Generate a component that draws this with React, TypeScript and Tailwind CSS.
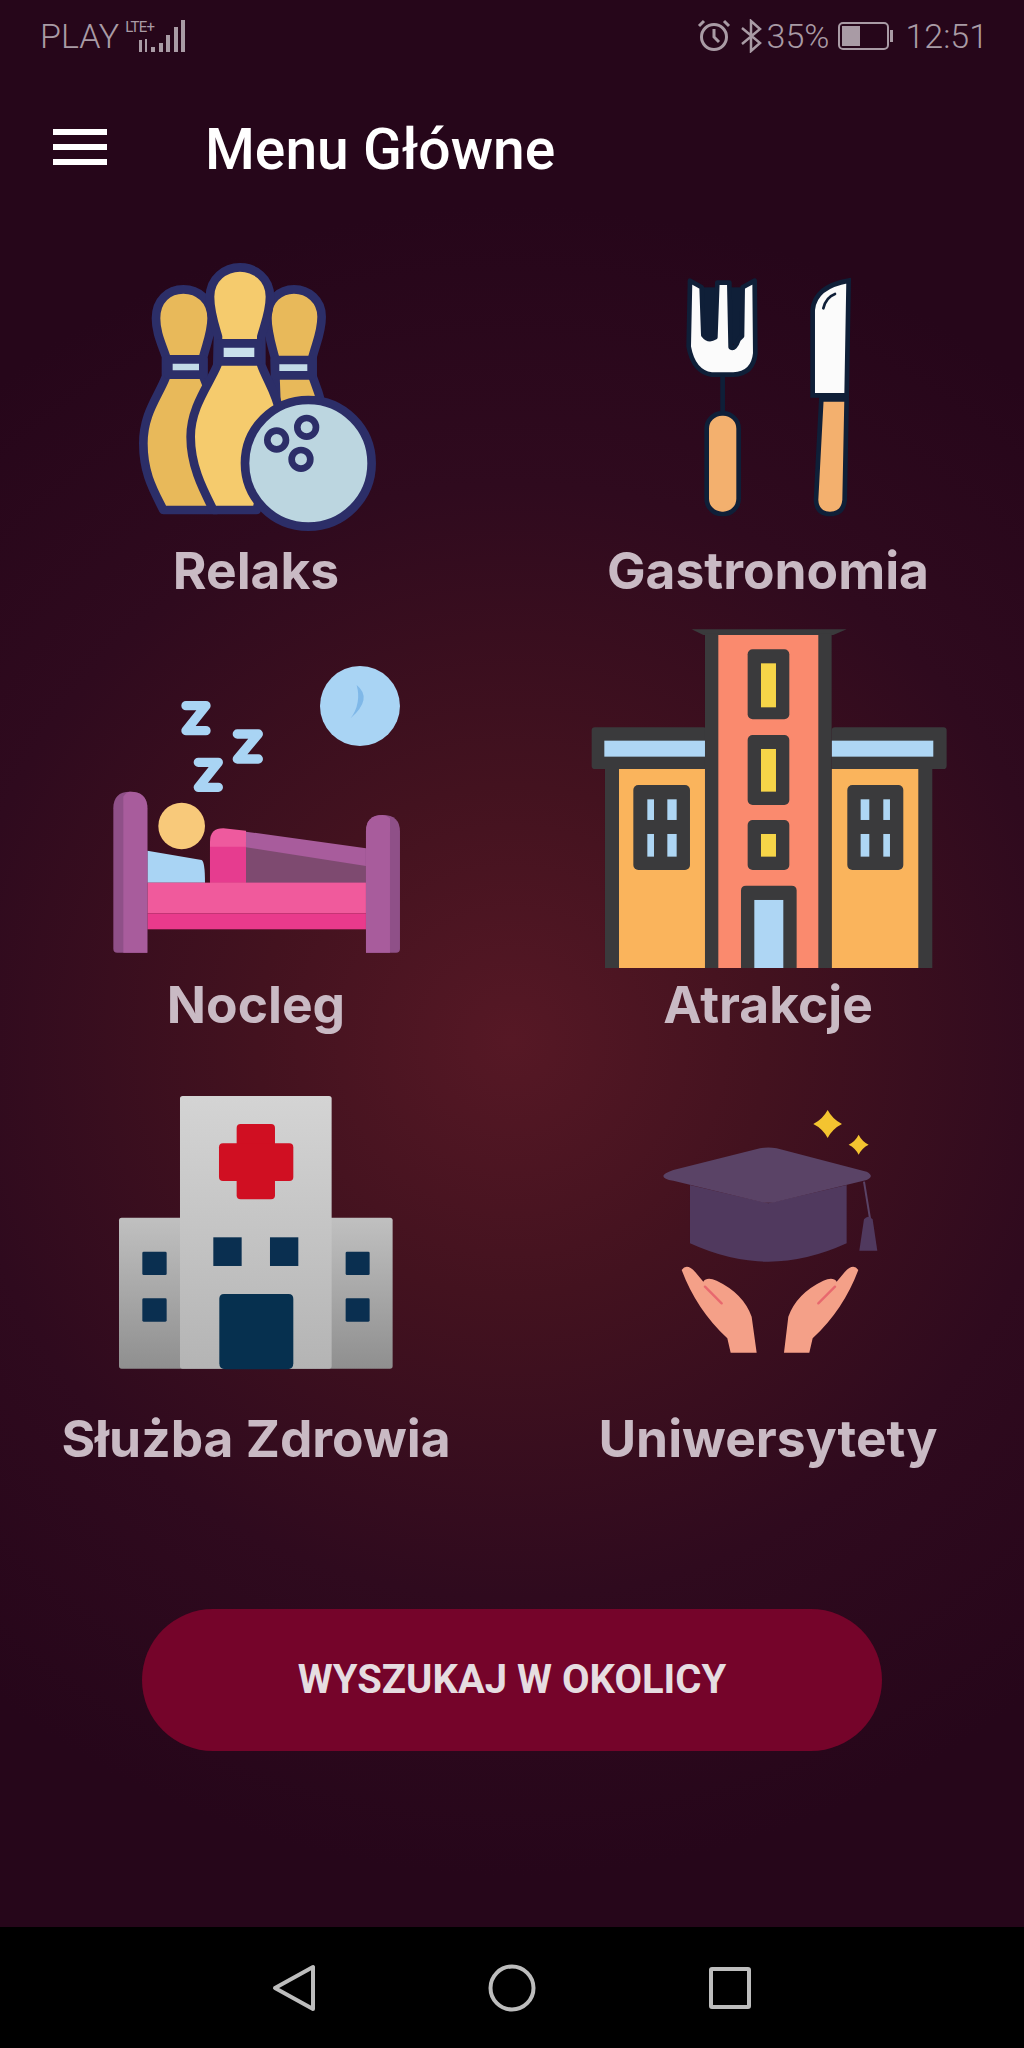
import React from 'react';

const navy = '#2c2e68';
const forkDark = '#0f1f38';
const wall = '#3a3a3c';
const iconBox = 'h-[341px] w-[384px] blur-[0.7px]';

const BowlingIcon = () => (
  <svg className={iconBox} viewBox="64 193 384 341">
    <g transform="translate(100 240) scale(0.3333)" stroke={navy} strokeWidth="26" strokeLinejoin="round">
      {/* back left pin */}
      <path fill="#e8b95a" d="M198 350C182 305 168 275 168 235C168 180 205 148 250 148C295 148 335 180 335 235C335 275 322 305 310 350L310 410C335 470 350 520 350 620L350 810L190 810C160 750 130 700 130 610C130 520 175 470 198 410Z" />
      <rect x="205" y="358" width="105" height="46" fill="#c3dbe8" />
      {/* back right pin */}
      <path fill="#e8b95a" d="M524 350C512 305 502 275 502 230C502 180 540 148 582 148C625 148 665 180 665 230C665 275 650 305 638 350L638 410C650 440 660 470 670 510L530 510Z" />
      <rect x="525" y="360" width="110" height="46" fill="#c3dbe8" />
      {/* front pin */}
      <path fill="#f5cb6d" d="M354 290C342 250 330 215 330 170C330 115 375 82 420 82C465 82 510 115 510 170C510 215 495 250 484 290L484 375C500 420 530 460 540 520L470 810L340 810C310 750 272 680 272 590C272 500 330 430 352 375Z" />
      <rect x="358" y="310" width="118" height="54" fill="#c9e0ec" />
      {/* ball */}
      <circle cx="625" cy="670" r="190" fill="#bcd6e0" />
      <circle cx="530" cy="600" r="28" fill="#bcd6e0" strokeWidth="20" />
      <circle cx="620" cy="562" r="28" fill="#bcd6e0" strokeWidth="20" />
      <circle cx="603" cy="658" r="28" fill="#bcd6e0" strokeWidth="20" />
    </g>
  </svg>
);

const CutleryIcon = () => (
  <svg className={iconBox} viewBox="576 193 384 341">
    <g transform="translate(640 250) scale(0.3333)">
      <rect x="188" y="112" width="120" height="170" fill={forkDark} />
      <path fill="#fbfbfb" stroke={forkDark} strokeWidth="14" strokeLinejoin="round" d="M150 92L185 112L190 255Q205 275 226 262L232 98L268 98L272 292Q285 300 296 268L306 258L308 112L344 92L346 310Q340 372 280 374L215 374Q160 366 146 290Z" />
      <rect x="241" y="378" width="14" height="112" fill={forkDark} />
      <rect x="200" y="490" width="96" height="302" rx="46" fill="#f3b06e" stroke={forkDark} strokeWidth="14" />
      <path fill="#fbfbfb" stroke={forkDark} strokeWidth="14" d="M518 436L518 180Q524 110 626 92L620 436Z" />
      <path fill="none" stroke={forkDark} strokeWidth="8" strokeLinecap="round" d="M550 175Q558 142 585 132" />
      <path fill="#f3b06e" stroke={forkDark} strokeWidth="14" d="M544 448L620 448L614 750Q610 792 570 792Q530 792 528 750Z" />
    </g>
  </svg>
);

const BedIcon = () => (
  <svg className={iconBox} viewBox="64 627 384 341">
    <g transform="translate(90 640) scale(0.3333)">
      <circle cx="810" cy="198" r="120" fill="#a9d4f4" />
      <path fill="#7fb8e8" d="M800 135Q850 175 782 235Q815 190 800 135Z" />
      <g fill="none" stroke="#a9d4f4" strokeWidth="28" strokeLinejoin="round" strokeLinecap="round">
        <polyline points="288,197 348,197 288,272 348,272" />
        <polyline points="442,282 505,282 442,357 505,357" />
        <polyline points="325,367 385,367 325,442 385,442" />
      </g>
      <circle cx="275" cy="558" r="70" fill="#f8c97a" />
      <path fill="#a9d4f4" d="M172 632L335 660Q345 665 345 728L172 728Z" />
      <path fill="#a85c9c" d="M468 575L828 625L828 728L468 728Z" />
      <path fill="#7e4a70" d="M468 622L828 678L828 728L468 728Z" />
      <path fill="#ee5a9e" d="M360 728L360 605Q360 565 400 565L468 572L468 728Z" />
      <path fill="#e63c8f" d="M360 728L360 620L468 620L468 728Z" />
      <rect x="172" y="728" width="656" height="92" fill="#f05a9c" />
      <rect x="172" y="820" width="656" height="48" fill="#e93a8c" />
      <path fill="#8f5088" d="M70 505Q70 455 120 455Q172 455 172 505L172 938L82 938Q70 938 70 926Z" />
      <path fill="#a85c9c" d="M100 470Q110 455 120 455Q172 455 172 505L172 938L100 938Z" />
      <path fill="#8f5088" d="M828 575Q828 525 878 525Q930 525 930 575L930 926Q930 938 918 938L828 938Z" />
      <path fill="#a85c9c" d="M828 575Q828 525 878 525Q888 525 900 535L900 938L828 938Z" />
    </g>
  </svg>
);

const BuildingIcon = () => (
  <svg className={iconBox} viewBox="576 627 384 341">
    <g transform="translate(570 620) scale(0.3333)">
      {/* wings */}
      <rect x="105" y="440" width="300" height="605" fill={wall} />
      <rect x="147" y="447" width="258" height="598" fill="#fab45c" />
      <rect x="785" y="440" width="302" height="605" fill={wall} />
      <rect x="785" y="447" width="260" height="598" fill="#fab45c" />
      <rect x="65" y="322" width="345" height="125" rx="10" fill={wall} />
      <rect x="103" y="362" width="302" height="48" fill="#aed6f4" />
      <rect x="785" y="322" width="345" height="125" rx="10" fill={wall} />
      <rect x="785" y="362" width="305" height="48" fill="#aed6f4" />
      {/* tower */}
      <path fill={wall} d="M365 28L830 28L790 45L400 45Z" />
      <rect x="405" y="40" width="380" height="1005" fill={wall} />
      <rect x="445" y="45" width="300" height="1000" fill="#fa8a6e" />
      <rect x="533" y="88" width="125" height="210" rx="15" fill={wall} />
      <rect x="573" y="130" width="45" height="132" fill="#f6d548" />
      <rect x="533" y="345" width="125" height="210" rx="15" fill={wall} />
      <rect x="573" y="387" width="45" height="128" fill="#f6d548" />
      <rect x="533" y="600" width="125" height="150" rx="15" fill={wall} />
      <rect x="573" y="642" width="45" height="68" fill="#f6d548" />
      <path fill={wall} d="M513 1045L513 812Q513 797 528 797L665 797Q680 797 680 812L680 1045Z" />
      <rect x="553" y="840" width="87" height="205" fill="#aed6f4" />
      {/* wing windows */}
      <rect x="190" y="495" width="170" height="255" rx="15" fill={wall} />
      <rect x="232" y="538" width="20" height="62" fill="#aed6f4" />
      <rect x="292" y="538" width="28" height="62" fill="#aed6f4" />
      <rect x="232" y="642" width="20" height="68" fill="#aed6f4" />
      <rect x="292" y="642" width="28" height="68" fill="#aed6f4" />
      <rect x="832" y="495" width="168" height="255" rx="15" fill={wall} />
      <rect x="872" y="538" width="26" height="62" fill="#aed6f4" />
      <rect x="940" y="538" width="20" height="62" fill="#aed6f4" />
      <rect x="872" y="642" width="26" height="68" fill="#aed6f4" />
      <rect x="940" y="642" width="20" height="68" fill="#aed6f4" />
    </g>
  </svg>
);

const HospitalIcon = () => (
  <svg className={iconBox} viewBox="64 1061 384 341">
    <defs>
      <linearGradient id="hospitalWing" x1="0" y1="0" x2="0" y2="1">
        <stop offset="0" stopColor="#c0c0c0" />
        <stop offset="1" stopColor="#8f8f8f" />
      </linearGradient>
      <linearGradient id="hospitalMain" x1="0" y1="0" x2="0" y2="1">
        <stop offset="0" stopColor="#d4d4d4" />
        <stop offset="1" stopColor="#b4b4b4" />
      </linearGradient>
    </defs>
    <g transform="translate(100 1080) scale(0.3333)">
      <rect x="57" y="413" width="821" height="453" rx="8" fill="url(#hospitalWing)" />
      <rect x="240" y="48" width="455" height="818" rx="8" fill="url(#hospitalMain)" />
      <rect x="410" y="132" width="115" height="226" rx="12" fill="#d00f22" />
      <rect x="357" y="190" width="223" height="113" rx="12" fill="#d00f22" />
      <g fill="#0a2f50">
        <rect x="340" y="472" width="85" height="86" />
        <rect x="510" y="472" width="85" height="86" />
        <rect x="127" y="515" width="73" height="70" rx="4" />
        <rect x="127" y="655" width="73" height="70" rx="4" />
        <rect x="737" y="515" width="72" height="70" rx="4" />
        <rect x="737" y="655" width="72" height="70" rx="4" />
      </g>
      <path fill="#06304f" d="M358 656Q358 642 372 642L566 642Q580 642 580 656L580 850Q580 868 562 868L376 868Q358 868 358 850Z" />
    </g>
  </svg>
);

const GraduationIcon = () => (
  <svg className={iconBox} viewBox="576 1061 384 341">
    <g transform="translate(640 1090) scale(0.3333)">
      <path fill="#f4c430" d="M563 60Q578 88 606 102Q578 116 563 144Q548 116 520 102Q548 88 563 60Z" />
      <path fill="#f4c430" d="M656 134Q666 154 686 164Q666 174 656 194Q646 174 626 164Q646 154 656 134Z" />
      <path fill="#50395e" d="M150 285L385 340L620 285L620 460Q500 515 385 515Q270 515 150 460Z" />
      <path fill="#5a4366" d="M70 258Q70 250 100 240L360 175Q385 170 410 175L680 245Q705 258 680 270L410 335Q385 342 360 335L100 272Q70 268 70 258Z" />
      <path fill="none" stroke="#5a4366" strokeWidth="6" d="M672 275L690 385" />
      <path fill="#50395e" d="M672 388Q685 372 698 388L712 482L658 482Z" />
      <path fill="#f4a088" d="M125 540Q140 518 165 545L190 575Q200 560 230 572Q310 610 335 680L350 788L272 788L262 745Q170 660 125 540Z" />
      <path fill="#f4a088" d="M655 540Q640 518 615 545L590 575Q580 560 550 572Q470 610 445 680L432 788L508 788L518 745Q610 660 655 540Z" />
      <path fill="none" stroke="#e8686e" strokeWidth="7" strokeLinecap="round" d="M195 590L245 640M585 590L535 640" />
    </g>
  </svg>
);

const items = [
  { label: 'Relaks', icon: <BowlingIcon /> },
  { label: 'Gastronomia', icon: <CutleryIcon /> },
  { label: 'Nocleg', icon: <BedIcon /> },
  { label: 'Atrakcje', icon: <BuildingIcon /> },
  { label: 'Służba Zdrowia', icon: <HospitalIcon /> },
  { label: 'Uniwersytety', icon: <GraduationIcon /> },
];

const StatusBar = () => (
  <div className="flex h-[72px] items-center justify-between pl-[40px] pr-[36px] text-[34px] font-light text-[#a99ba5]">
    <div className="flex items-center">
      <span>PLAY</span>
      <div className="relative ml-[6px] h-[34px] w-[68px]">
        <span className="absolute left-0 top-0 text-[15px] font-normal leading-[16px] tracking-tighter">LTE+</span>
        <svg className="absolute left-0 top-0 h-[34px] w-[68px]" viewBox="0 0 68 34" fill="#a99ba5">
          <rect x="14" y="21" width="3" height="12" />
          <rect x="20" y="20" width="2" height="13" />
          <rect x="26" y="28" width="4" height="5" />
          <rect x="34" y="24" width="4" height="9" />
          <rect x="41" y="16" width="4" height="17" />
          <rect x="49" y="8" width="4" height="25" />
          <rect x="56" y="1" width="4" height="32" />
        </svg>
      </div>
    </div>
    <div className="flex items-center">
      <svg className="h-[34px] w-[36px]" viewBox="0 0 36 34" fill="none" stroke="#a99ba5" strokeWidth="3">
        <circle cx="18" cy="18" r="12.5" />
        <path d="M18 10V18L23 23M3 7L8 2M33 7L28 2" />
      </svg>
      <svg className="ml-[8px] h-[34px] w-[22px]" viewBox="0 0 22 34" fill="none" stroke="#a99ba5" strokeWidth="2.5">
        <path d="M2 9L20 24L11 32V2L20 10L2 25" />
      </svg>
      <span className="ml-[5px]">35%</span>
      <svg className="ml-[9px] h-[28px] w-[56px]" viewBox="0 0 56 28">
        <rect x="1" y="1" width="49" height="26" rx="4" fill="none" stroke="#a99ba5" strokeWidth="2" />
        <rect x="4" y="4" width="18" height="20" fill="#a99ba5" />
        <rect x="52" y="8" width="3" height="12" fill="#a99ba5" />
      </svg>
      <span className="ml-[11px]">12:51</span>
    </div>
  </div>
);

const App: React.FC = () => {
  return (
    <div className="flex h-[2048px] w-[1024px] flex-col overflow-hidden bg-black font-['Roboto',sans-serif]">
      <div className="flex h-[1927px] flex-col bg-[#26061a] bg-[radial-gradient(circle_at_50%_54%,#561825_0%,#43121f_22%,#2f0a1e_48%,#26061a_72%)]">
        <StatusBar />

        <div className="flex h-[121px] items-start pt-[42px]">
          <div className="ml-[53px] flex w-[54px] flex-col gap-[9px] pt-[15px]">
            <div className="h-[6px] bg-white" />
            <div className="h-[6px] bg-white" />
            <div className="h-[6px] bg-white" />
          </div>
          <h1 className="ml-[98px] text-[57px] font-medium leading-[72px] text-white">Menu Główne</h1>
        </div>

        <div className="grid grid-cols-2">
          {items.map((item) => (
            <div key={item.label} className="flex h-[434px] flex-col items-center">
              {item.icon}
              <div className="flex h-[73px] items-center font-['Inter',sans-serif] text-[51.5px] font-bold text-[#c9bac4]">
                {item.label}
              </div>
            </div>
          ))}
        </div>

        <button className="mx-auto mt-[114px] flex h-[142px] w-[740px] items-center justify-center rounded-full bg-[#75042a] text-[40px] font-bold text-[#e6dde1]">
          WYSZUKAJ W OKOLICY
        </button>
      </div>

      <div className="flex h-[121px] items-center justify-center gap-[170px]">
        <svg className="h-[48px] w-[48px]" viewBox="0 0 48 48" fill="none" stroke="#bdbdbd" strokeWidth="4" strokeLinejoin="round">
          <path d="M5 24L43 3V45Z" />
        </svg>
        <svg className="h-[48px] w-[48px]" viewBox="0 0 48 48" fill="none" stroke="#bdbdbd" strokeWidth="4">
          <circle cx="24" cy="24" r="21.5" />
        </svg>
        <svg className="h-[48px] w-[48px]" viewBox="0 0 48 48" fill="none" stroke="#bdbdbd" strokeWidth="4" strokeLinejoin="round">
          <rect x="5" y="5" width="38" height="38" rx="1" />
        </svg>
      </div>
    </div>
  );
};

export default App;
